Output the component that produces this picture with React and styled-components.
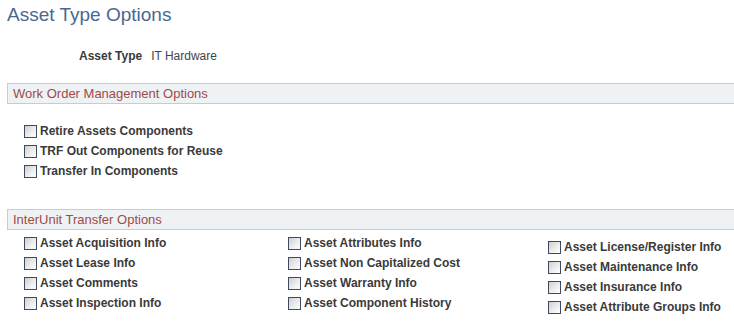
import React from 'react';
import styled, { createGlobalStyle } from 'styled-components';

const GlobalStyle = createGlobalStyle`
  body {
    margin: 0;
    background: #ffffff;
    font-family: Arial, "Liberation Sans", sans-serif;
  }
`;

const workOrderOptions = [
  'Retire Assets Components',
  'TRF Out Components for Reuse',
  'Transfer In Components',
];

const transferColumns = [
  ['Asset Acquisition Info', 'Asset Lease Info', 'Asset Comments', 'Asset Inspection Info'],
  ['Asset Attributes Info', 'Asset Non Capitalized Cost', 'Asset Warranty Info', 'Asset Component History'],
  ['Asset License/Register Info', 'Asset Maintenance Info', 'Asset Insurance Info', 'Asset Attribute Groups Info'],
];

const Page = styled.div`
  width: 734px;
  height: 329px;
  overflow: hidden;
`;

const Title = styled.h1`
  margin: 4px 0 0 7px;
  font-size: 19px;
  line-height: 22px;
  font-weight: normal;
  color: #4a6793;
`;

const FieldRow = styled.div`
  display: flex;
  align-items: center;
  gap: 9px;
  margin: 22px 0 0 79px;
  height: 16px;
  font-size: 12px;
`;

const FieldLabel = styled.span`
  font-weight: bold;
  color: #3a3a3a;
`;

const FieldValue = styled.span`
  color: #444444;
`;

const SectionHeader = styled.div`
  margin: ${(p) => p.$top}px 0 0 7px;
  height: 19px;
  line-height: 19px;
  padding-left: 5px;
  border-top: 1px solid #c6ccd1;
  border-bottom: 1px solid #c6ccd1;
  border-left: 1px solid #c6ccd1;
  background: #eef2f4;
  color: #a04a48;
  font-size: 13px;
`;

const OptionList = styled.div`
  display: flex;
  flex-direction: column;
  margin: ${(p) => p.$top}px 0 0 24px;
`;

const OptionGrid = styled.div`
  display: grid;
  grid-template-columns: 264px 260px 1fr;
  margin: 3px 0 0 24px;
`;

const Column = styled.div`
  display: flex;
  flex-direction: column;
  padding-top: ${(p) => p.$offset || 0}px;
`;

const Option = styled.label`
  display: flex;
  align-items: center;
  height: 20px;
  gap: 3px;
  font-size: 12px;
  font-weight: bold;
  color: #3a3a3a;
  white-space: nowrap;
`;

const Box = styled.span`
  box-sizing: border-box;
  width: 13px;
  height: 13px;
  border: 1px solid #3b4963;
  background: linear-gradient(135deg, #cfcfcf 0%, #ececec 55%, #ffffff 100%);
`;

function CheckOption({ label }) {
  return (
    <Option>
      <Box />
      {label}
    </Option>
  );
}

export default function App() {
  return (
    <Page>
      <GlobalStyle />
      <Title>Asset Type Options</Title>
      <FieldRow>
        <FieldLabel>Asset Type</FieldLabel>
        <FieldValue>IT Hardware</FieldValue>
      </FieldRow>

      <SectionHeader $top={19}>Work Order Management Options</SectionHeader>
      <OptionList $top={17}>
        {workOrderOptions.map((o) => (
          <CheckOption key={o} label={o} />
        ))}
      </OptionList>

      <SectionHeader $top={28}>InterUnit Transfer Options</SectionHeader>
      <OptionGrid>
        {transferColumns.map((col, i) => (
          <Column key={i} $offset={i === 2 ? 4 : 0}>
            {col.map((o) => (
              <CheckOption key={o} label={o} />
            ))}
          </Column>
        ))}
      </OptionGrid>
    </Page>
  );
}
